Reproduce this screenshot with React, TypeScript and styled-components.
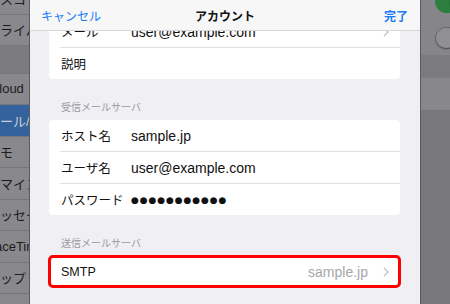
import React from "react";
import styled, { createGlobalStyle } from "styled-components";

const GlobalStyle = createGlobalStyle`
  html, body {
    margin: 0;
    padding: 0;
    background: #7a7a7e;
  }
  body {
    font-family: "Liberation Sans", "Noto Sans CJK JP", sans-serif;
    -webkit-font-smoothing: antialiased;
  }
`;

const Screen = styled.div`
  width: 450px;
  height: 304px;
  display: flex;
  overflow: hidden;
`;

// **************************
//        SIDEBAR (dimmed)
// **************************

const Sidebar = styled.div`
  width: 29px;
  flex-shrink: 0;
  overflow: hidden;
  background-color: #7c7c80;
`;

const SidebarList = styled.div`
  margin-top: -17px;
  display: flex;
  flex-direction: column;
`;

const SidebarRow = styled.div<{ $selected?: boolean }>`
  box-sizing: border-box;
  height: 31.5px;
  display: flex;
  align-items: center;
  white-space: nowrap;
  font-size: 13px;
  color: ${({ $selected }) => ($selected ? "#c9ced8" : "#1c1c1e")};
  background-color: ${({ $selected }) => ($selected ? "#33629c" : "#89898d")};
  border-bottom: 1px solid #76767a;
`;

const SidebarText = styled.span`
  margin-left: -13px;
`;

const SidebarGap = styled.div`
  height: 26.5px;
  background-color: #7c7c80;
  border-bottom: 1px solid #76767a;
`;

type SideItem = { label?: string; selected?: boolean; gap?: boolean };

const sideItems: SideItem[] = [
  { label: "パスコード" },
  { label: "プライバシー" },
  { gap: true },
  { label: "iCloud" },
  { label: "メール/連絡先/カレンダー", selected: true },
  { label: "メモ" },
  { label: "リマインダー" },
  { label: "メッセージ" },
  { label: "FaceTime" },
  { label: "マップ" },
  { label: "Safari" },
];

// **************************
//          SHEET
// **************************

const Sheet = styled.div`
  position: relative;
  width: 390px;
  flex-shrink: 0;
  overflow: hidden;
  background-color: #efeff4;
  border-left: 1px solid #5c5c60;
  border-right: 1px solid #5c5c60;
`;

const NavBar = styled.div`
  position: absolute;
  top: 0;
  left: 0;
  right: 0;
  height: 31px;
  box-sizing: border-box;
  padding: 0 12px 0 11px;
  display: flex;
  align-items: center;
  justify-content: space-between;
  background-color: #f7f7f8;
  border-bottom: 1px solid #d6d6da;
  z-index: 1;
`;

const NavButton = styled.span<{ $bold?: boolean }>`
  font-size: 12px;
  color: #1a7cf5;
  font-weight: ${({ $bold }) => ($bold ? 700 : 400)};
`;

const NavTitle = styled.span`
  position: absolute;
  left: 50%;
  transform: translateX(-50%);
  font-size: 12px;
  font-weight: 700;
  color: #111;
`;

const Content = styled.div`
  padding: 16px 20px 0 19px;
  display: flex;
  flex-direction: column;
`;

const Group = styled.div<{ $highlighted?: boolean }>`
  background-color: #fff;
  border-radius: 4px;
  display: flex;
  flex-direction: column;
  outline: ${({ $highlighted }) => ($highlighted ? "3px solid #ff0000" : "none")};
  outline-offset: -2px;
`;

const Row = styled.div`
  height: 31px;
  display: flex;
  align-items: center;
  padding: 0 11px 0 12px;
`;

const Divider = styled.div`
  height: 1px;
  margin-left: 11px;
  background-color: #e0e0e4;
`;

const Label = styled.span`
  width: 70px;
  flex-shrink: 0;
  font-size: 12.5px;
  color: #111;
  white-space: nowrap;
`;

const Value = styled.span`
  flex: 1;
  font-size: 14px;
  color: #111;
  white-space: nowrap;
`;

const Dots = styled.span`
  flex: 1;
  font-family: "DejaVu Sans", sans-serif;
  font-size: 9px;
  letter-spacing: 0.9px;
  color: #111;
`;

const Detail = styled.span`
  margin-left: auto;
  font-size: 14px;
  color: #a6a6ab;
  margin-right: 15px;
`;

const SectionHeader = styled.div`
  margin: 22px 0 5px;
  height: 14px;
  line-height: 14px;
  padding-left: 12px;
  font-size: 10px;
  color: #9a9aa0;
`;

const Chevron = () => (
  <svg width="6" height="10" viewBox="0 0 6 10" aria-hidden="true">
    <path d="M1 1 L5 5 L1 9" fill="none" stroke="#c4c4c9" strokeWidth="1.4" />
  </svg>
);

// **************************
//      RIGHT PANE (dimmed)
// **************************

const RightPane = styled.div`
  flex: 1;
  display: flex;
  flex-direction: column;
  background-color: #78787c;
`;

const Band = styled.div<{ $h: number; $tone: string }>`
  height: ${({ $h }) => $h}px;
  background-color: ${({ $tone }) => $tone};
  display: flex;
  flex-direction: column;
  padding-left: 14px;
  overflow: hidden;
`;

const Switch = styled.div<{ $on?: boolean; $top: number }>`
  position: relative;
  flex-shrink: 0;
  margin-top: ${({ $top }) => $top}px;
  width: 36px;
  height: 22px;
  border-radius: 11px;
  box-sizing: border-box;
  background-color: ${({ $on }) => ($on ? "#2c7f3e" : "#8c8c90")};
  border: 1px solid ${({ $on }) => ($on ? "#2c7f3e" : "#6a6a6e")};
  &::after {
    content: "";
    position: absolute;
    top: 0;
    ${({ $on }) => ($on ? "right: 0;" : "left: 0;")}
    width: 20px;
    height: 20px;
    border-radius: 50%;
    background-color: #909094;
    box-shadow: 0 1px 2px rgba(0, 0, 0, 0.35);
  }
`;

const App: React.FC = () => {
  return (
    <>
      <GlobalStyle />
      <Screen>
        <Sidebar>
          <SidebarList>
            {sideItems.map((it, i) =>
              it.gap ? (
                <SidebarGap key={i} />
              ) : (
                <SidebarRow key={i} $selected={it.selected}>
                  <SidebarText>{it.label}</SidebarText>
                </SidebarRow>
              )
            )}
          </SidebarList>
        </Sidebar>

        <Sheet>
          <NavBar>
            <NavButton>キャンセル</NavButton>
            <NavTitle>アカウント</NavTitle>
            <NavButton $bold>完了</NavButton>
          </NavBar>
          <Content>
            <Group>
              <Row>
                <Label>メール</Label>
                <Value>user@example.com</Value>
                <Chevron />
              </Row>
              <Divider />
              <Row>
                <Label>説明</Label>
              </Row>
            </Group>

            <SectionHeader>受信メールサーバ</SectionHeader>
            <Group>
              <Row>
                <Label>ホスト名</Label>
                <Value>sample.jp</Value>
              </Row>
              <Divider />
              <Row>
                <Label>ユーザ名</Label>
                <Value>user@example.com</Value>
              </Row>
              <Divider />
              <Row>
                <Label>パスワード</Label>
                <Dots>●●●●●●●●●●●</Dots>
              </Row>
            </Group>

            <SectionHeader>送信メールサーバ</SectionHeader>
            <Group $highlighted>
              <Row>
                <Label>SMTP</Label>
                <Detail>sample.jp</Detail>
                <Chevron />
              </Row>
            </Group>
          </Content>
        </Sheet>

        <RightPane>
          <Band $h={55} $tone="#86868a">
            <Switch $on $top={-9} />
            <Switch $top={13.5} />
          </Band>
          <Band $h={23} $tone="#7b7b7f" />
          <Band $h={32} $tone="#88888c" />
        </RightPane>
      </Screen>
    </>
  );
};

export default App;
